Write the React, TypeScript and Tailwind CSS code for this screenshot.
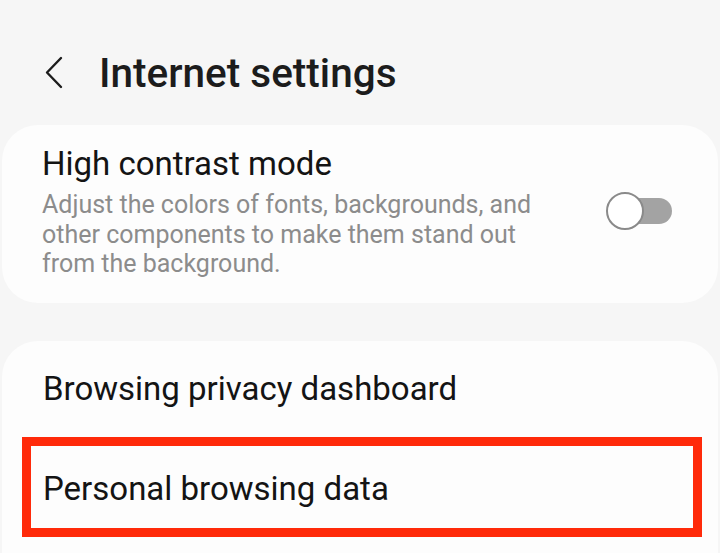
const Chevron = () => (
  <svg width="20" height="34" viewBox="0 0 20 34" fill="none" className="shrink-0">
    <path d="M17 2 L3 16.5 L17 31" stroke="#1c1c1c" strokeWidth="2.4" strokeLinecap="round" strokeLinejoin="round" />
  </svg>
);

const Toggle = () => (
  <div className="relative w-[66px] h-[38px] shrink-0">
    <div className="absolute right-0 top-[6px] h-[26px] w-[50px] rounded-full bg-[#a3a3a3]" />
    <div className="absolute left-0 top-0 h-[38px] w-[38px] rounded-full border-2 border-[#8a8a8a] bg-white" />
  </div>
);

export default function App() {
  return (
    <div
      className="w-[720px] h-[553px] overflow-hidden bg-[#f6f6f6]"
      style={{ fontFamily: "Roboto, 'Noto Sans', sans-serif" }}
    >
      <header className="flex items-center pl-[44px] pt-[49px] pb-[28px]">
        <Chevron />
        <h1 className="ml-[35px] text-[40.5px] leading-[48px] font-medium text-[#1c1c1c]">Internet settings</h1>
      </header>

      <section className="mx-[2px] rounded-[36px] bg-[#fdfdfd] pl-[40px] pr-[46px] pt-[19px] pb-[24px] flex items-center justify-between">
        <div>
          <div className="text-[33px] leading-[40px] text-[#141414]">High contrast mode</div>
          <p className="mt-[6px] w-[510px] text-[25px] leading-[29.5px] text-[#8c8c8c]">
            Adjust the colors of fonts, backgrounds, and other components to make them stand out from the background.
          </p>
        </div>
        <Toggle />
      </section>

      <section className="mt-[38px] mx-[2px] rounded-t-[36px] bg-[#fdfdfd] pb-[40px]">
        <div className="h-[96px] flex items-center pl-[41px] text-[33px] text-[#141414]">
          Browsing privacy dashboard
        </div>
        <div className="ml-[20px] mr-[16px] h-[100px] border-[9px] border-[#ff2a0a] flex items-center pl-[12px] pt-[4px] text-[33px] text-[#141414]">
          Personal browsing data
        </div>
      </section>
    </div>
  );
}
